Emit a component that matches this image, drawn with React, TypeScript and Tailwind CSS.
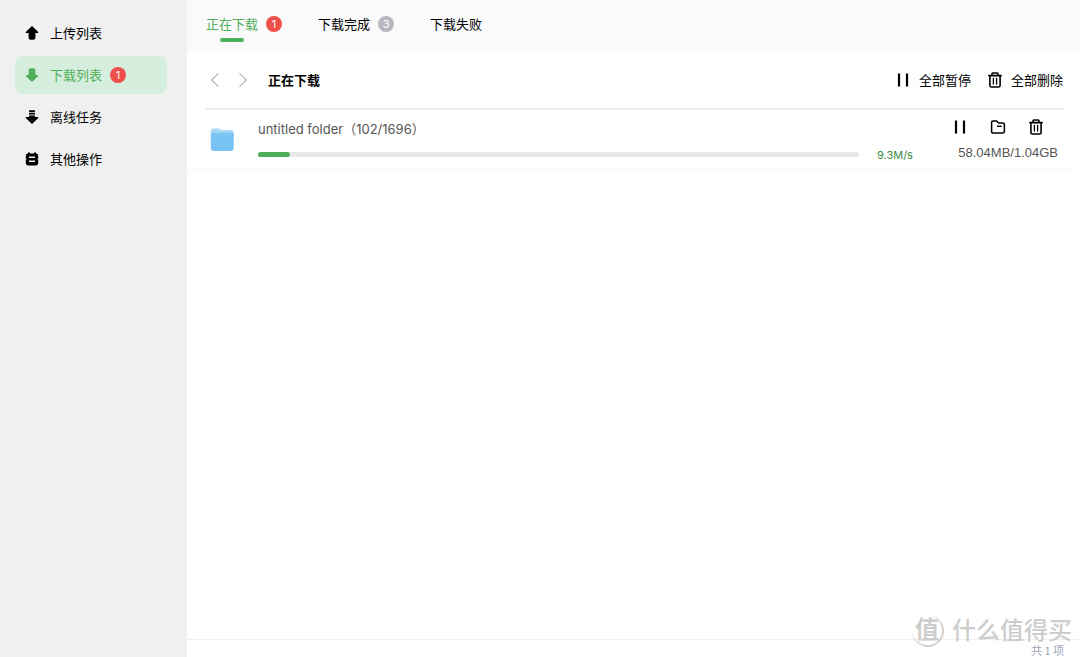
import React from "react";

/* -------------------------------------------------------------------------- */
/*                                   ICONS                                    */
/* -------------------------------------------------------------------------- */

const UploadIcon = () => (
  <svg viewBox="0 0 14 14" className="size-3.5" fill="currentColor">
    <path d="M6.4 0.6Q7 0 7.6 0.6L13.2 6Q13.8 6.9 12.8 7H10.4V11.8Q10.4 13.8 8.4 13.8H5.6Q3.6 13.8 3.6 11.8V7H1.2Q0.2 6.9 0.8 6Z" />
  </svg>
);

const DownloadIcon = () => (
  <svg viewBox="0 0 14 14" className="size-3.5" fill="currentColor">
    <path d="M6.4 13.4Q7 14 7.6 13.4L13.2 8Q13.8 7.1 12.8 7H10.4V2.2Q10.4 0.2 8.4 0.2H5.6Q3.6 0.2 3.6 2.2V7H1.2Q0.2 7.1 0.8 8Z" />
  </svg>
);

const OfflineIcon = () => (
  <svg viewBox="0 0 14 14" className="size-3.5" fill="currentColor">
    <rect x="4" y="0.2" width="6" height="1.7" rx="0.6" />
    <rect x="4" y="2.8" width="6" height="1.7" rx="0.3" />
    <path d="M4 5.4H10V7H12.8Q13.8 7.1 13.2 8L7.6 13.4Q7 14 6.4 13.4L0.8 8Q0.2 7.1 1.2 7H4Z" />
  </svg>
);

const OtherIcon = () => (
  <svg viewBox="0 0 14 14" className="size-3.5" fill="currentColor">
    <path
      fillRule="evenodd"
      d="M3 0.4H5V1.6H9V0.4H11V1.6Q13.2 1.6 13.2 4V6.6H12.6V7.4H13.2V11Q13.2 13.4 11 13.4H3Q0.8 13.4 0.8 11V7.4H1.4V6.6H0.8V4Q0.8 1.6 3 1.6ZM4 4.6V6H10V4.6ZM4 8.6V10H10V8.6Z"
    />
  </svg>
);

const PauseIcon = () => (
  <svg viewBox="0 0 16 16" className="size-4" stroke="currentColor" strokeWidth="2.2">
    <path d="M4 1.6V14.4M12 1.6V14.4" />
  </svg>
);

const TrashIcon = () => (
  <svg
    viewBox="0 0 16 16"
    className="size-4"
    fill="none"
    stroke="currentColor"
    strokeWidth="1.6"
    strokeLinejoin="round"
    strokeLinecap="round"
  >
    <path d="M1.8 3.6H14.2M5 3.4V1.9Q5 1 5.9 1H10.1Q11 1 11 1.9V3.4M2.9 3.8V13.4Q2.9 15 4.5 15H11.5Q13.1 15 13.1 13.4V3.8" />
    <path d="M6.4 6.4V12M9.6 6.4V12" strokeWidth="1.3" />
  </svg>
);

const OpenFolderIcon = () => (
  <svg
    viewBox="0 0 16 16"
    className="size-4"
    fill="none"
    stroke="currentColor"
    strokeWidth="1.5"
    strokeLinejoin="round"
    strokeLinecap="round"
  >
    <path d="M1.6 3.4Q1.6 2 3 2H6.6L8.6 4H13Q14.4 4 14.4 5.4V12.6Q14.4 14 13 14H3Q1.6 14 1.6 12.6ZM7.6 7.2H11" />
  </svg>
);

const ChevronIcon = ({ d }: { d: string }) => (
  <svg
    viewBox="0 0 10 16"
    className="h-4 w-2.5"
    fill="none"
    stroke="currentColor"
    strokeWidth="1.3"
  >
    <path d={d} />
  </svg>
);

const FolderIcon = () => (
  <svg viewBox="0 0 24 24" className="size-6 shrink-0">
    <path
      d="M0.8 3.4Q0.8 0.4 3.8 0.4H8Q9.6 0.4 10.6 1.4Q11.4 2.1 12.6 2.1H20.7Q23.7 2.1 23.7 5.1V12H0.8Z"
      fill="#a5daf8"
    />
    <path d="M0.8 5.8H23.7V20Q23.7 23 20.7 23H3.8Q0.8 23 0.8 20Z" fill="#79c4f5" />
    <path d="M0.8 6Q1 4.6 2.6 4.6H21.8Q23.5 4.6 23.7 6Z" fill="#86c6ee" />
  </svg>
);

/* -------------------------------------------------------------------------- */
/*                                    DATA                                    */
/* -------------------------------------------------------------------------- */

const navItems = [
  { label: "上传列表", icon: <UploadIcon /> },
  { label: "下载列表", icon: <DownloadIcon />, count: 1, active: true },
  { label: "离线任务", icon: <OfflineIcon /> },
  { label: "其他操作", icon: <OtherIcon /> },
];

const tabs = [
  { label: "正在下载", count: 1, active: true },
  { label: "下载完成", count: 3 },
  { label: "下载失败" },
];

const tasks = [
  {
    name: "untitled folder（102/1696）",
    speed: "9.3M/s",
    size: "58.04MB/1.04GB",
    percent: 5.4,
  },
];

const Badge = ({ count, muted }: { count: number; muted?: boolean }) => (
  <span
    className={`flex size-4 items-center justify-center rounded-full text-[11px] leading-4 text-white ${
      muted ? "bg-[#b7b8be]" : "bg-[#ee4f49]"
    }`}
  >
    {count}
  </span>
);

/* -------------------------------------------------------------------------- */
/*                                  SECTIONS                                  */
/* -------------------------------------------------------------------------- */

const Sidebar = () => (
  <aside className="w-[187px] shrink-0 bg-[#f0f0f0] pt-3.5 pr-5 pl-[15px]">
    <nav className="flex flex-col gap-1">
      {navItems.map((item) => (
        <button
          key={item.label}
          className={`flex h-[38px] items-center rounded-lg px-2.5 ${
            item.active ? "bg-[#d6eedd] text-[#4fae5a]" : "text-black"
          }`}
        >
          {item.icon}
          <span className="ml-[11px]">{item.label}</span>
          {item.count && (
            <span className="ml-2">
              <Badge count={item.count} />
            </span>
          )}
        </button>
      ))}
    </nav>
  </aside>
);

const TaskRow = ({ task }: { task: (typeof tasks)[number] }) => (
  <li className="mr-1.5 flex h-[60px] items-center border-b border-[#f5f5f5] pr-3 pl-[23px] text-[#555]">
    <FolderIcon />
    <div className="ml-6 min-w-0 flex-1 pt-1">
      <p className="h-5 truncate leading-5">{task.name}</p>
      <div className="mt-1.5 flex h-5 items-center">
        <div className="h-[5px] flex-1 rounded-full bg-[#e9e9e9]">
          <div
            className="h-full rounded-full bg-[#4fae5a]"
            style={{ width: `${task.percent}%` }}
          />
        </div>
        <span className="ml-[18px] w-16 text-[11px] text-[#3b8a45]">{task.speed}</span>
      </div>
    </div>
    <div className="flex w-[121px] flex-col items-end pt-0.5">
      <div className="flex h-6 items-center gap-[22px] pr-[18px] text-black">
        <button aria-label="暂停">
          <PauseIcon />
        </button>
        <button aria-label="打开文件夹">
          <OpenFolderIcon />
        </button>
        <button aria-label="删除">
          <TrashIcon />
        </button>
      </div>
      <span className="mr-1 font-['Liberation_Sans',sans-serif] leading-7 whitespace-nowrap">
        {task.size}
      </span>
    </div>
  </li>
);

const Watermark = () => (
  <div className="pointer-events-none absolute right-2 bottom-2.5 flex items-center gap-2 text-[#cdcdcd]">
    <span className="flex size-8 items-center justify-center rounded-full border-r-2 border-b-2 border-[#d2d2d2] text-2xl font-bold">
      值
    </span>
    <span className="text-2xl leading-8 font-medium">什么值得买</span>
  </div>
);

const App = () => {
  return (
    <div className="flex min-h-screen bg-white font-['Inter','Noto_Sans_CJK_SC',sans-serif] text-[13px] leading-5 text-black">
      <Sidebar />

      <main className="relative flex min-w-0 flex-1 flex-col">
        <header className="flex h-[52px] gap-9 bg-[#fafafa] pl-[19px]">
          {tabs.map((tab) => (
            <button key={tab.label} className="flex h-12 items-center gap-2">
              <span
                className={`relative ${tab.active ? "text-[#4fae5a]" : "text-black"}`}
              >
                {tab.label}
                {tab.active && (
                  <span className="absolute top-6 left-1/2 h-1 w-6 -translate-x-1/2 rounded-full bg-[#4fae5a]" />
                )}
              </span>
              {tab.count && <Badge count={tab.count} muted={!tab.active} />}
            </button>
          ))}
        </header>

        <div className="mr-[17px] ml-[19px] flex h-[58px] items-center border-b-2 border-[#ececec]">
          <div className="flex gap-[18px] pl-1 text-[#bcbcbc]">
            <button aria-label="后退">
              <ChevronIcon d="M8.5 1.5L1.5 8L8.5 14.5" />
            </button>
            <button aria-label="前进">
              <ChevronIcon d="M1.5 1.5L8.5 8L1.5 14.5" />
            </button>
          </div>
          <h1 className="ml-5 font-bold">正在下载</h1>

          <div className="ml-auto flex gap-4">
            <button className="flex items-center gap-2">
              <PauseIcon />
              全部暂停
            </button>
            <button className="flex items-center gap-2">
              <TrashIcon />
              全部删除
            </button>
          </div>
        </div>

        <ul className="flex-1">
          {tasks.map((task) => (
            <TaskRow key={task.name} task={task} />
          ))}
        </ul>

        <footer className="h-[18px] border-t border-[#f0f0f0] pr-4 text-right font-['Noto_Sans_CJK_SC',sans-serif] text-[11px] text-[#a0a3b8]">
          共 1 项
        </footer>

        <Watermark />
      </main>
    </div>
  );
};

export default App;
